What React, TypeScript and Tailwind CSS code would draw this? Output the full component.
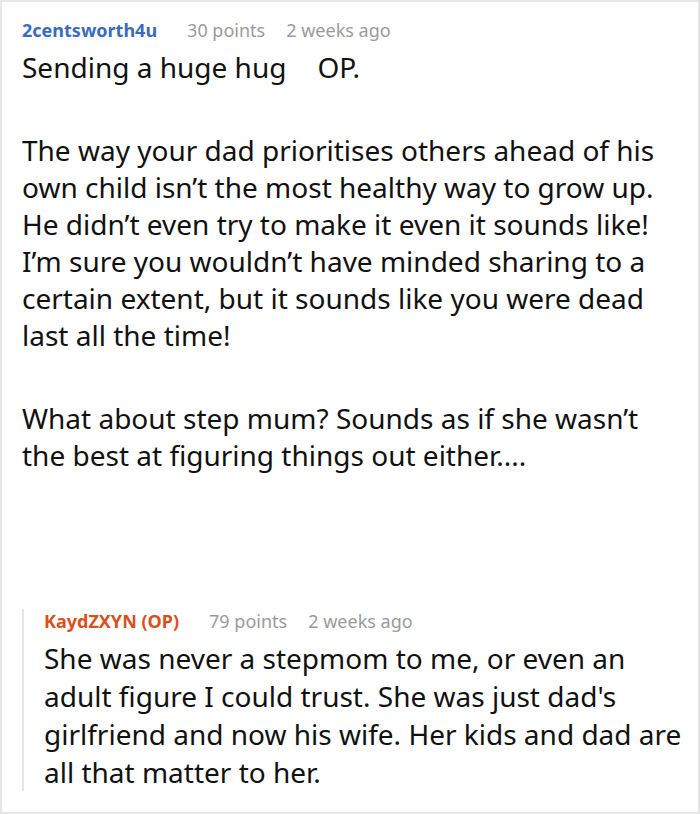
import React from 'react'

function Meta({ name, color, points, when }: { name: string; color: string; points: string; when: string }) {
  return (
    <div className="flex items-baseline text-[18px] leading-[24px]">
      <span className={`mr-[30px] font-bold ${color}`}>{name}</span>
      <span className="mr-[21px] text-[#9a9a9a]">{points}</span>
      <span className="text-[#9a9a9a]">{when}</span>
    </div>
  )
}

export default function App() {
  return (
    <div
      className="h-[814px] w-[700px] overflow-hidden border-2 border-[#e6e6e6] bg-white pl-[20px] pr-[14px] pt-[16px] text-[#111111]"
      style={{ fontFamily: '"Noto Sans", "Open Sans", sans-serif' }}
    >
      <Meta name="2centsworth4u" color="text-[#3a6bbf]" points="30 points" when="2 weeks ago" />
      <div className="mt-[7px] flex flex-col gap-[46px] text-[28px] leading-[37px]">
        <p>
          Sending a huge hug<span className="inline-block w-[31px]" />OP.
        </p>
        <p>
          The way your dad prioritises others ahead of his own child isn’t the most healthy way to grow up. He
          didn’t even try to make it even it sounds like! I’m sure you wouldn’t have minded sharing to a certain
          extent, but it sounds like you were dead last all the time!
        </p>
        <p>
          What about step mum? Sounds as if she wasn’t the best at figuring things out either....
        </p>
      </div>

      <div className="mt-[135px] border-l-2 border-[#e6e6e6] pl-[20px]">
        <Meta name="KaydZXYN (OP)" color="text-[#d9501d]" points="79 points" when="2 weeks ago" />
        <p className="mt-[6px] text-[28px] leading-[38px]">
          She was never a stepmom to me, or even an adult figure I could trust. She was just dad's girlfriend and
          now his wife. Her kids and dad are all that matter to her.
        </p>
      </div>
    </div>
  )
}
